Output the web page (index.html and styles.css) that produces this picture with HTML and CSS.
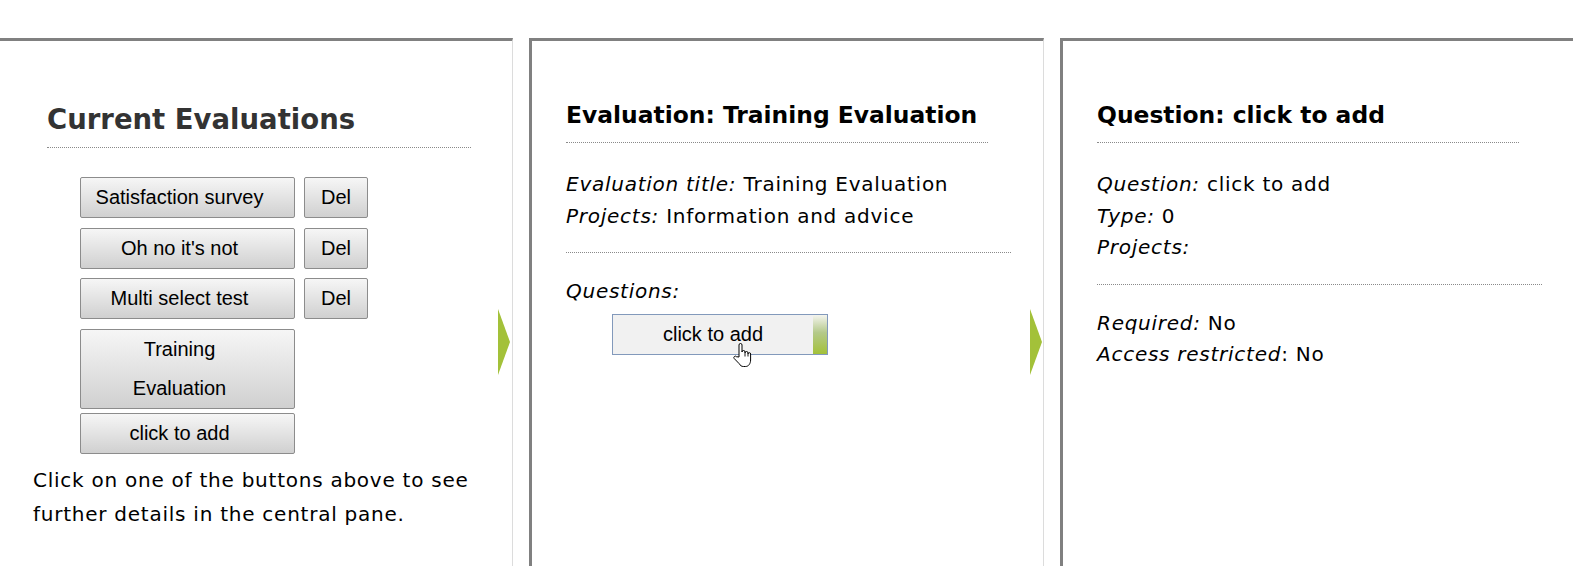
FILE: index.html
```html
<!DOCTYPE html>
<html lang="en">
<head>
<meta charset="utf-8">
<title>Evaluations</title>
<link rel="stylesheet" href="styles.css">
</head>
<body>
<div class="panels">
  <section class="panel panel-left">
    <h2 class="list-title">Current Evaluations</h2>
    <div class="eval-list">
      <div class="eval-row"><button class="btn btn-main">Satisfaction survey</button><button class="btn btn-del">Del</button></div>
      <div class="eval-row"><button class="btn btn-main">Oh no it's not</button><button class="btn btn-del">Del</button></div>
      <div class="eval-row"><button class="btn btn-main">Multi select test</button><button class="btn btn-del">Del</button></div>
      <div class="eval-row row-tight"><button class="btn btn-main">Training<br>Evaluation</button></div>
      <div class="eval-row row-last"><button class="btn btn-main">click to add</button></div>
    </div>
    <p class="hint">Click on one of the buttons above to see further details in the central pane.</p>
    <svg class="arrow" viewBox="0 0 12 66" aria-hidden="true"><polygon points="0,0 12,33 0,66" /></svg>
  </section>

  <section class="panel panel-mid">
    <h2 class="pane-title">Evaluation: Training Evaluation</h2>
    <div class="field-group">
      <div class="field"><em>Evaluation title:</em> Training Evaluation</div>
      <div class="field"><em>Projects:</em> Information and advice</div>
    </div>
    <div class="field questions-label"><em>Questions:</em></div>
    <div class="question-wrap">
      <button class="btn-question"><span class="q-text">click to add</span><span class="q-strip"></span></button>
      <svg class="cursor" viewBox="0 0 19 25" aria-hidden="true">
        <path d="M6 14 V2 a1.5 1.5 0 0 1 3 0 V9 a1.5 1.5 0 0 1 3 0 V10 a1.5 1.5 0 0 1 3 0 V11 a1.3 1.3 0 0 1 2.6 0 V17 c0 3.5 -2 6.5 -5 6.5 H10.5 c-2 0 -3.2 -1 -4.3 -2.8 L1.2 15.5 a1.4 1.4 0 0 1 2.2 -1.8 Z" fill="#fff" stroke="#000" stroke-width="1" stroke-linejoin="round"/>
        <path d="M12 10 V13.5 M15 11 V13.5" stroke="#000" stroke-width="0.9" fill="none"/>
      </svg>
    </div>
    <svg class="arrow arrow-mid" viewBox="0 0 12 66" aria-hidden="true"><polygon points="0,0 12,33 0,66" /></svg>
  </section>

  <section class="panel panel-right">
    <h2 class="pane-title">Question: click to add</h2>
    <div class="field-group">
      <div class="field"><em>Question:</em> click to add</div>
      <div class="field"><em>Type:</em> 0</div>
      <div class="field"><em>Projects:</em></div>
    </div>
    <div class="field-group-plain">
      <div class="field"><em>Required:</em> No</div>
      <div class="field"><em>Access restricted</em>: No</div>
    </div>
  </section>
</div>
</body>
</html>
```

FILE: styles.css
```css
html, body {
  margin: 0;
  padding: 0;
  background: #fff;
  overflow: hidden;
}

body {
  font-family: "DejaVu Sans", Verdana, sans-serif;
  color: #000;
}

.panels {
  display: flex;
  gap: 16px;
  margin: 38px 0 0 -6px;
}

.panel {
  position: relative;
  flex: 0 0 515px;
  box-sizing: border-box;
  height: 540px;
  border-top: 3px solid #808080;
  border-left: 3px solid #808080;
  border-right: 1px solid #dcdcdc;
  padding: 0 32px 0 34px;
}

.panel-left {
  padding-left: 36px;
  padding-right: 29px;
}

/* Left pane */
.list-title {
  margin: 62px 0 0 14px;
  width: 424px;
  padding-bottom: 12px;
  border-bottom: 1px dotted #8a8a8a;
  font-size: 27.5px;
  line-height: 32px;
  font-weight: bold;
  color: #333;
}

.eval-list {
  margin: 29px 0 0 47px;
}

.eval-row {
  display: flex;
  gap: 9px;
  margin-bottom: 9.5px;
}

.eval-row.row-tight {
  margin-bottom: 4px;
}

.eval-row.row-last {
  margin-bottom: 0;
}

.btn {
  font-family: "Liberation Sans", Arial, sans-serif;
  font-size: 20px;
  line-height: 39px;
  color: #000;
  border: 1px solid #8c8c8c;
  border-radius: 2px;
  background: linear-gradient(#f6f6f6, #d0d0d0);
  margin: 0;
  box-sizing: border-box;
}

.btn-main {
  width: 215px;
  padding: 0 16px 0 0;
  text-align: center;
}

.btn-del {
  width: 64px;
  padding: 0;
}

.hint {
  margin: 9px 0 0;
  width: 450px;
  font-size: 20px;
  line-height: 34px;
  letter-spacing: 0.75px;
}

.arrow {
  position: absolute;
  right: 2px;
  top: 268px;
  width: 12px;
  height: 66px;
  fill: #a3c139;
}

.arrow-mid {
  right: 1px;
}

/* Middle & right panes */
.pane-title {
  margin: 60px 23px 0 0;
  padding-bottom: 13px;
  border-bottom: 1px dotted #8a8a8a;
  font-size: 23.4px;
  line-height: 28px;
  font-weight: bold;
}

.field-group {
  margin-top: 26px;
  padding-bottom: 20px;
  border-bottom: 1px dotted #8a8a8a;
}

.field-group-plain {
  margin-top: 23px;
}

.field {
  font-size: 20px;
  line-height: 31.6px;
  letter-spacing: 0.74px;
}

.field em {
  font-style: italic;
}

.questions-label {
  margin-top: 22.6px;
}

.question-wrap {
  position: relative;
  margin: 6.5px 0 0 46px;
  width: 215px;
}

.btn-question {
  display: flex;
  align-items: stretch;
  width: 216px;
  height: 41px;
  padding: 0;
  margin: 0;
  box-sizing: border-box;
  border: 1px solid #8299bb;
  background: #f1f1f1;
  font-family: "Liberation Sans", Arial, sans-serif;
  font-size: 20px;
  color: #000;
}

.q-text {
  flex: 1;
  line-height: 39px;
  text-align: center;
}

.q-strip {
  width: 14px;
  background: linear-gradient(#f4f4ee, #b4c98a 45%, #a3c139);
}

.cursor {
  position: absolute;
  left: 121px;
  top: 29px;
  width: 19px;
  height: 25px;
}
```
